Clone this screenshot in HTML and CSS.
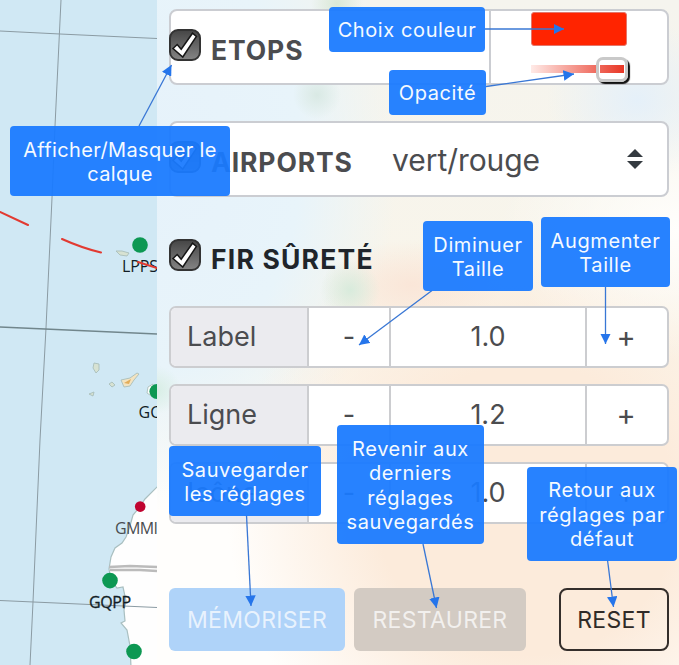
FILE: index.html
```html
<!DOCTYPE html>
<html lang="fr">
<head>
<meta charset="utf-8">
<title>Calques</title>
<link rel="stylesheet" href="styles.css">
</head>
<body>
<svg class="defs" width="0" height="0" aria-hidden="true">
  <defs>
    <linearGradient id="box" x1="0" y1="0" x2="0" y2="1"><stop offset="0" stop-color="#454545"/><stop offset="1" stop-color="#858585"/></linearGradient>
    <symbol id="check" viewBox="0 0 32 32">
      <rect x="1" y="1" width="30" height="30" rx="8" fill="url(#box)" stroke="#333" stroke-width="2"/>
      <path d="M4 19.5 8.200 15.500 12.200 20.200 23.500 4.200 27.400 7.500 13.800 28Z" fill="#fff" stroke="#161616" stroke-width="1.5"/>
    </symbol>
    <marker id="tip" viewBox="0 0 10 10" refX="10" refY="5" markerWidth="10.500" markerHeight="10.500" markerUnits="userSpaceOnUse" orient="auto"><path d="M0 0 10 5 0 10Z" fill="#2575eb"/></marker>
  </defs>
</svg>
<div class="app">
  <svg class="map" viewBox="0 0 157 665">
    <path class="land" d="M159 485 145 499 139 508 133 515 130 526 126 537 122 543 115 548 111 557 109 569 111 580 117 588 123 587 126 601 124 610 125 621 121 623 127 630 130 646 131 667H159Z"/>
    <path class="grid" d="M61 0 55 126 52 198 46 328 40 440 33 602 30 665M0 31 60 34 157 38.5M0 600.5 157 607.5"/>
    <path class="grid dark" d="M0 327 157 334"/>
    <path class="border" d="M109 567 130 566 157 567M110 570 140 570 157 571"/>
    <g class="isles">
      <path d="M116 251 122 251 129 253 127 256 120 255Z"/>
      <path d="M94 363 99 364 99 370 96 373 93 368Z"/>
      <path class="warm" d="M121 380 130 378 137 373 139 374 134 380 130 386 124 387Z"/>
      <path d="M109 384 112 382 115 385 112 387Z"/><path d="M89 394 94 392 93 396Z"/>
      <path class="white" d="M153 384 148 387 147 393 153 397Z"/>
    </g>
    <path class="core" d="M124 383 131 379 129 384Z"/>
    <circle class="ok" cx="140" cy="245" r="7.8"/>
    <circle class="ok" cx="157" cy="391.500" r="7.600"/>
    <circle class="ok" cx="110" cy="580.600" r="7.800"/>
    <circle class="ok" cx="134" cy="651.500" r="7.800"/>
    <circle class="ko" cx="140.200" cy="506.600" r="5.300"/>
    <text x="122" y="271.500" textLength="36">LPPS</text>
    <text x="138.500" y="418">GC</text>
    <text class="soft" x="115" y="533.500" textLength="43">GMMI</text>
    <text class="strong" x="89" y="607.500" textLength="42">GQPP</text>
    <path class="route" d="M0 212 28 225M62 239Q82 248 101 252.500M138 262 157 268"/>
  </svg>
  <main class="panel">
    <section class="card etops">
      <div class="cell name"><svg class="check"><use href="#check"/></svg><span class="title">ETOPS</span></div>
      <div class="cell paint">
        <div class="swatch"></div>
        <div class="slider"><div class="thumb"></div></div>
      </div>
    </section>
    <section class="card airports">
      <svg class="check"><use href="#check"/></svg><span class="title">AIRPORTS</span>
      <span class="select">vert/rouge</span>
      <svg class="caret" viewBox="0 0 16 20"><path d="M0 8 8 0 16 8ZM0 12H16L8 20Z" fill="#343a40"/></svg>
    </section>
    <h2 class="heading"><svg class="check"><use href="#check"/></svg><span class="title">FIR SÛRETÉ</span></h2>
    <section class="steppers">
      <div class="stepper"><span class="label">Label</span><span>-</span><span>1.0</span><span class="plus">+</span></div>
      <div class="stepper"><span class="label">Ligne</span><span>-</span><span>1.2</span><span class="plus">+</span></div>
      <div class="stepper"><span class="label">Icône</span><span>-</span><span>1.0</span><span class="plus">+</span></div>
    </section>
    <footer class="actions">
      <button class="btn save">MÉMORISER</button>
      <button class="btn restore">RESTAURER</button>
      <button class="btn reset">RESET</button>
    </footer>
  </main>
  <svg class="arrows" viewBox="0 0 679 665">
    <path d="M139 126 171.500 65"/><path d="M485 29H564"/><path d="M486 86.500 574 74"/>
    <path d="M432 290.500 359 345"/><path d="M605.500 287V344"/><path d="M246.500 515 251 606"/>
    <path d="M423 544 436.500 608"/><path d="M607.500 560 613.500 607"/>
  </svg>
  <div class="note n-layer">Afficher/Masquer le<br>calque</div>
  <div class="note n-color">Choix couleur</div>
  <div class="note n-opacity">Opacité</div>
  <div class="note n-minus">Diminuer<br>Taille</div>
  <div class="note n-plus">Augmenter<br>Taille</div>
  <div class="note n-save">Sauvegarder<br>les réglages</div>
  <div class="note n-restore">Revenir aux<br>derniers<br>réglages<br>sauvegardés</div>
  <div class="note n-reset">Retour aux<br>réglages par<br>défaut</div>
</div>
</body>
</html>
```
FILE: styles.css
```css
* { box-sizing: border-box; }
body { margin: 0; font-family: Inter, "Liberation Sans", sans-serif; color: #4b4c4f; }
.defs { position: absolute; }
.app { position: relative; display: flex; width: 679px; height: 665px; overflow: hidden; }

.map { flex: none; width: 157px; height: 665px; background: #d0e8f4; font: 16px "Open Sans", sans-serif; }
.land { fill: #fefefe; stroke: #a9bfc0; stroke-width: 1.2; }
.grid { fill: none; stroke: #8b9ba3; stroke-width: 1; }
.grid.dark { stroke: #71868c; stroke-width: 1.4; }
.border { fill: none; stroke: #bbb; stroke-width: 2.4; }
.isles { fill: #d7e2d2; stroke: #a9beba; stroke-width: .9; }
.isles .warm { fill: #f3e3c0; }
.isles .white { fill: #fff; }
.core { fill: #e2ad5b; }
.ok { fill: #0d9853; }
.ko { fill: #c00430; }
.map text { fill: #111c24; }
.map .soft { fill: #494d50; }
.map .strong { stroke: #111c24; stroke-width: .3; }
.route { fill: none; stroke: #e23a31; stroke-width: 2; stroke-linecap: round; }

.panel {
  flex: 1; display: flex; flex-direction: column; padding: 9px 10px 0 12px;
  background:
    radial-gradient(circle at 160px 95px, #d9e9e4 0, #d9e9e400 24px),
    radial-gradient(circle at 193px 290px, #d8ebdc 0, #d8ebdc00 30px),
    radial-gradient(circle at 180px 4px, #d9e8d6 0, #d9e8d600 26px),
    radial-gradient(ellipse 90px 45px at 255px 285px, #fae6d8 0, #fae6d800 100%),
    radial-gradient(circle at 0 390px, #d8eee5 0, #d8eee500 24px),
    radial-gradient(ellipse 90px 80px at 480px 100px, #e5f0f9 0, #e5f0f900 100%),
    radial-gradient(ellipse 180px 130px at 522px 230px, #fffefc 0, #fffefc00 100%),
    radial-gradient(ellipse 300px 290px at 370px 510px, #fcebdb 0, #fcebdb 50%, #fcebdb00 100%),
    radial-gradient(ellipse 240px 350px at 0 160px, #e6f2fa 0, #e8f4fa 60%, #e8f4fa00 100%),
    linear-gradient(#f5f4ee, #f9f5ea 50%, #fffefc 75%);
}
.card { display: flex; height: 76px; border: 2px solid #cbcdd2; border-radius: 8px; background: #fff; }
.check { flex: none; width: 32px; height: 32px; margin-left: -2px; }
.title { font-weight: 700; font-size: 26.5px; line-height: 32px; letter-spacing: .9px; }
.name { display: flex; flex: 1; padding-top: 18px; gap: 10px; }
.name .title { padding-top: 5px; }
.paint { width: 178px; border-left: 2px solid #cbcdd2; padding-left: 40px; }
.swatch { width: 96px; height: 34px; margin-top: 1px; border: 1px solid #e4776c; border-radius: 3px; background: #ff2400; }
.slider { display: flex; justify-content: flex-end; align-items: center; width: 97px; height: 26px; margin-top: 10px; background: linear-gradient(90deg, #ff240018, #e83423) 0 50% / 94px 8px no-repeat; }
.thumb { width: 32px; height: 25px; border: 3px solid #c9c9c9; border-radius: 7px; box-shadow: 2px 2px 1px #111, inset 0 0 0 1px #fff; }
.airports { margin-top: 36px; padding: 18px 24px 0 0; gap: 10px; }
.airports .title { padding-top: 5px; width: 144px; white-space: nowrap; }
.select { flex: 1; padding: 1px 0 0 27px; font-size: 30px; line-height: 36px; letter-spacing: -.05px; }
.caret { width: 16px; height: 20px; margin-top: 8px; }
.heading { display: flex; gap: 10px; height: 32px; margin: 42px 0 0 2px; color: #20252b; }
.heading .title { padding-top: 4px; letter-spacing: 1.2px; }
.steppers { display: grid; gap: 16px; margin-top: 35px; }
.stepper { display: grid; grid-template-columns: 136px 82px 196px 1fr; height: 62px; border: 2px solid #cccdd0; border-radius: 7px; background: #fff; overflow: hidden; font-size: 27px; line-height: 57px; text-align: center; }
.stepper span + span { border-left: 2px solid #cccdd0; }
.stepper .label { padding-left: 16px; background: #ebebef; text-align: left; }
.stepper .plus { padding-right: 2px; font-size: 29px; }
.actions { display: flex; margin-top: 64px; }
.btn { height: 63px; padding: 1px 0 0; border: 0; border-radius: 6px; font: 23px Inter, sans-serif; color: #ffffffb8; letter-spacing: .3px; }
.save { width: 176px; background: #afd3f9; }
.restore { width: 172px; margin-left: 9px; background: #d3cbc3; }
.reset { width: 110px; margin-left: auto; border: 2px solid #342e2b; border-radius: 8px; background: none; color: #302b28; }

.arrows { position: absolute; inset: 0; fill: none; stroke: #3977d5; stroke-width: 1.3; }
.arrows > path { marker-end: url(#tip); }
.note { position: absolute; display: flex; align-items: center; justify-content: center; padding-top: 2px; border-radius: 4px; background: #1a7afff0; color: #f5faff; font-size: 20px; line-height: 24.500px; letter-spacing: .6px; text-align: center; white-space: nowrap; }
.n-layer { left: 10px; top: 126px; width: 220px; height: 70px; letter-spacing: .35px; }
.n-color { left: 329px; top: 7px; width: 156px; height: 45px; }
.n-opacity { left: 389px; top: 70px; width: 97px; height: 45px; }
.n-minus { left: 423px; top: 221px; width: 110px; height: 70px; }
.n-plus { left: 541px; top: 217px; width: 129px; height: 70px; }
.n-save { left: 169px; top: 446px; width: 152px; height: 70px; }
.n-restore { left: 337px; top: 425px; width: 147px; height: 119px; }
.n-reset { left: 527px; top: 467px; width: 150px; height: 94px; }
```
